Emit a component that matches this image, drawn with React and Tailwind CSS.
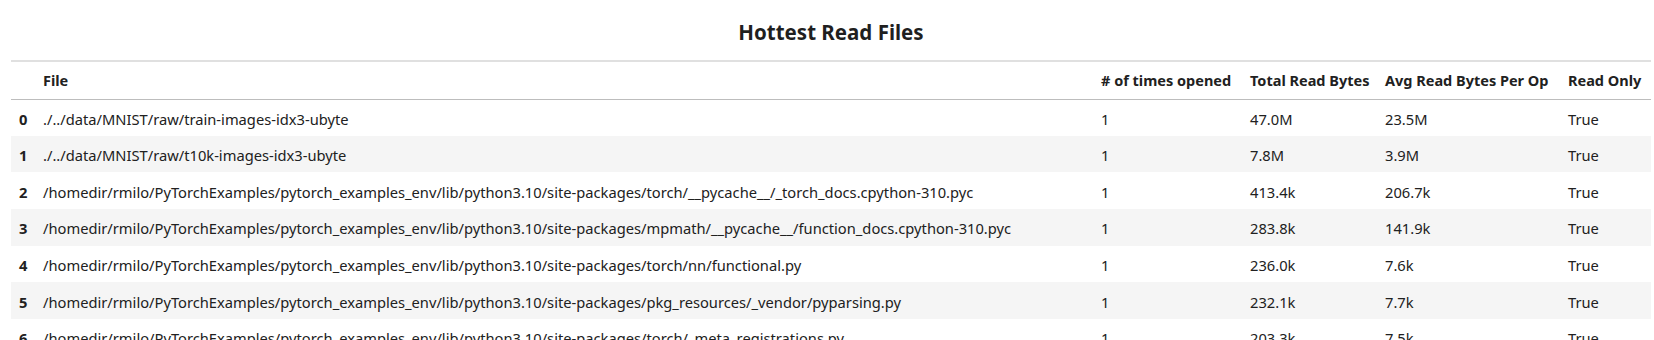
import React from 'react';

const rows = [
  ['./../data/MNIST/raw/train-images-idx3-ubyte', '1', '47.0M', '23.5M', 'True'],
  ['./../data/MNIST/raw/t10k-images-idx3-ubyte', '1', '7.8M', '3.9M', 'True'],
  ['/homedir/rmilo/PyTorchExamples/pytorch_examples_env/lib/python3.10/site-packages/torch/__pycache__/_torch_docs.cpython-310.pyc', '1', '413.4k', '206.7k', 'True'],
  ['/homedir/rmilo/PyTorchExamples/pytorch_examples_env/lib/python3.10/site-packages/mpmath/__pycache__/function_docs.cpython-310.pyc', '1', '283.8k', '141.9k', 'True'],
  ['/homedir/rmilo/PyTorchExamples/pytorch_examples_env/lib/python3.10/site-packages/torch/nn/functional.py', '1', '236.0k', '7.6k', 'True'],
  ['/homedir/rmilo/PyTorchExamples/pytorch_examples_env/lib/python3.10/site-packages/pkg_resources/_vendor/pyparsing.py', '1', '232.1k', '7.7k', 'True'],
  ['/homedir/rmilo/PyTorchExamples/pytorch_examples_env/lib/python3.10/site-packages/torch/_meta_registrations.py', '1', '203.3k', '7.5k', 'True'],
];

const headers = ['File', '# of times opened', 'Total Read Bytes', 'Avg Read Bytes Per Op', 'Read Only'];

export default function App() {
  return (
    <div className="w-[1654px] h-[340px] overflow-hidden bg-white text-[#212121] font-['Noto_Sans',sans-serif]">
      <h1 className="pt-[20px] pb-[16px] pl-[11px] w-[1651px] text-center text-[20.5px] leading-[24px] font-bold text-[#1f1f1f]">
        Hottest Read Files
      </h1>
      <table className="ml-[11px] w-[1640px] table-fixed border-collapse text-[14.7px]">
        <colgroup>
          <col className="w-[24px]" />
          <col className="w-[1058px]" />
          <col className="w-[149px]" />
          <col className="w-[135px]" />
          <col className="w-[183px]" />
          <col className="w-[91px]" />
        </colgroup>
        <thead>
          <tr className="h-[38px] border-t-2 border-t-[#e0e0e0] border-b border-b-[#bdbdbd]">
            <th className="px-2" />
            {headers.map((h) => (
              <th key={h} className="px-2 pt-[2px] text-left text-[14.5px] font-bold whitespace-nowrap">
                {h}
              </th>
            ))}
          </tr>
        </thead>
        <tbody>
          {rows.map((r, i) => (
            <tr key={i} className={i % 2 === 1 ? 'h-[36.67px] bg-[#f5f5f5]' : 'h-[36.67px]'}>
              <th className="pl-[8px] pt-[2px] text-left font-bold">{i}</th>
              {r.map((c, j) => (
                <td key={j} className="px-2 pt-[2px] whitespace-nowrap">
                  {c}
                </td>
              ))}
            </tr>
          ))}
        </tbody>
      </table>
    </div>
  );
}
